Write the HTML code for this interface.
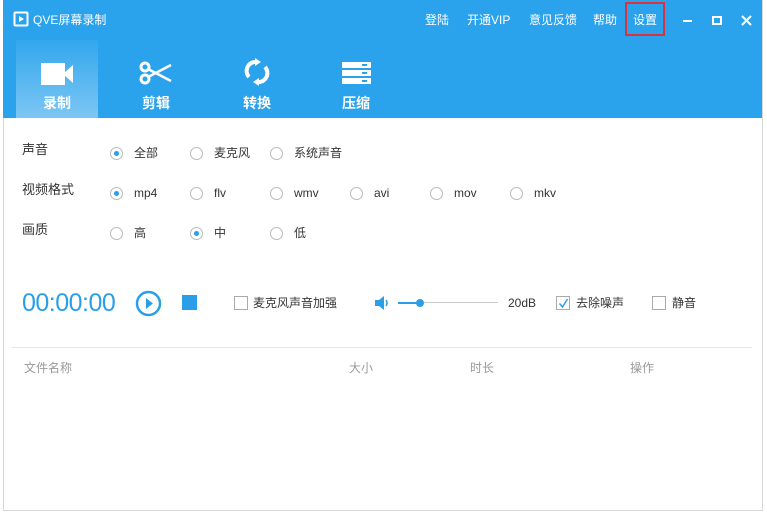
<!DOCTYPE html>
<html><head><meta charset="utf-8"><style>
*{margin:0;padding:0;box-sizing:border-box}
body{width:767px;height:515px;background:#fff;position:relative;overflow:hidden;font-family:"Liberation Sans","Noto Sans CJK SC",sans-serif;font-size:12px;color:#333}
.a{position:absolute;white-space:nowrap}
#win{position:absolute;left:3px;top:0;width:760px;height:511px;border:1px solid #d6d6d6;border-top:none}
#hd{position:absolute;left:3px;top:0;width:759px;height:118px;background:#2ba2ec}
.t{color:#fff;font-size:12px;line-height:14px}
.tab{position:absolute;top:40px;width:82px;height:78px}
.tab .l{position:absolute;bottom:5px;width:100%;text-align:center;color:#fff;font-weight:bold;font-size:14px}
.tab svg{position:absolute;left:23px;top:21px}
.lab{font-size:13px;color:#333;line-height:14px}
.r{position:absolute;width:13px;height:13px;border:1px solid #bbb;border-radius:50%;background:#fff}
.r.on::after{content:"";position:absolute;left:3px;top:3px;width:5px;height:5px;border-radius:50%;background:#2a9fe8}
.ro{font-size:12px;color:#333;line-height:14px}
.cb{position:absolute;width:14px;height:14px;border:1px solid #aaa;background:#fff}
.gh{color:#999;font-size:12px;line-height:14px}
</style></head><body>
<div id="win"></div>
<div id="hd"></div>
<svg class="a" style="left:13px;top:11px" width="16" height="16"><rect x="0.5" y="0.5" width="15" height="15" rx="2" fill="#fff"/><rect x="2.5" y="2.5" width="11" height="11" fill="#2ba2ec"/><path d="M6 5L11 8L6 11Z" fill="#fff"/></svg>
<div class="a t" style="left:33px;top:13px">QVE屏幕录制</div>
<div class="a t" style="left:425px;top:13px">登陆</div>
<div class="a t" style="left:467px;top:13px">开通VIP</div>
<div class="a t" style="left:529px;top:13px">意见反馈</div>
<div class="a t" style="left:593px;top:13px">帮助</div>
<div class="a t" style="left:633px;top:13px">设置</div>
<div class="a" style="left:625px;top:2px;width:40px;height:34px;border:2px solid #d9333f"></div>
<div class="a" style="left:683px;top:20px;width:9px;height:2px;background:#fff"></div>
<div class="a" style="left:712px;top:16px;width:10px;height:9px;border:2px solid #fff"></div>
<svg class="a" style="left:741px;top:15px" width="11" height="11"><path d="M1 1L10 10M10 1L1 10" stroke="#fff" stroke-width="2"/></svg>
<div class="tab" style="left:16px;background:linear-gradient(#33a7ed,#7cc6f3)"><svg width="36" height="26" style="left:25px;top:22px"><rect x="0" y="1" width="24" height="22" fill="#fff"/><path d="M22 12L32 3V21Z" fill="#fff"/></svg><div class="l">录制</div></div>
<div class="tab" style="left:115px"><svg width="36" height="26"><circle cx="7" cy="6" r="4" fill="none" stroke="#fff" stroke-width="3"/><circle cx="7" cy="18" r="4" fill="none" stroke="#fff" stroke-width="3"/><path d="M10 8L33 20M10 16L33 4" stroke="#fff" stroke-width="2.5"/></svg><div class="l">剪辑</div></div>
<div class="tab" style="left:216px"><svg width="36" height="30" style="top:18px"><path d="M10 19A9 9 0 0 1 18 4" fill="none" stroke="#fff" stroke-width="4"/><path d="M16 0L22 4L16 8Z" fill="#fff"/><path d="M26 9A9 9 0 0 1 18 24" fill="none" stroke="#fff" stroke-width="4"/><path d="M20 20L14 24L20 28Z" fill="#fff"/></svg><div class="l">转换</div></div>
<div class="tab" style="left:315px"><svg width="36" height="26"><rect x="4" y="1" width="29" height="6" fill="#fff"/><rect x="4" y="9" width="29" height="6" fill="#fff"/><rect x="4" y="17" width="29" height="6" fill="#fff"/><rect x="24" y="3" width="5" height="2" fill="#2ba2ec"/><rect x="24" y="11" width="5" height="2" fill="#2ba2ec"/><rect x="24" y="19" width="5" height="2" fill="#2ba2ec"/></svg><div class="l">压缩</div></div>

<div class="a lab" style="left:22px;top:143px">声音</div>
<div class="a lab" style="left:22px;top:183px">视频格式</div>
<div class="a lab" style="left:22px;top:223px">画质</div>

<div class="r on" style="left:110px;top:147px"></div><div class="a ro" style="left:134px;top:146px">全部</div>
<div class="r" style="left:190px;top:147px"></div><div class="a ro" style="left:214px;top:146px">麦克风</div>
<div class="r" style="left:270px;top:147px"></div><div class="a ro" style="left:294px;top:146px">系统声音</div>

<div class="r on" style="left:110px;top:187px"></div><div class="a ro" style="left:134px;top:186px">mp4</div>
<div class="r" style="left:190px;top:187px"></div><div class="a ro" style="left:214px;top:186px">flv</div>
<div class="r" style="left:270px;top:187px"></div><div class="a ro" style="left:294px;top:186px">wmv</div>
<div class="r" style="left:350px;top:187px"></div><div class="a ro" style="left:374px;top:186px">avi</div>
<div class="r" style="left:430px;top:187px"></div><div class="a ro" style="left:454px;top:186px">mov</div>
<div class="r" style="left:510px;top:187px"></div><div class="a ro" style="left:534px;top:186px">mkv</div>

<div class="r" style="left:110px;top:227px"></div><div class="a ro" style="left:134px;top:226px">高</div>
<div class="r on" style="left:190px;top:227px"></div><div class="a ro" style="left:214px;top:226px">中</div>
<div class="r" style="left:270px;top:227px"></div><div class="a ro" style="left:294px;top:226px">低</div>

<div class="a" style="left:22px;top:289px;font-size:25px;color:#2a9fe8;line-height:28px;letter-spacing:-0.5px">00:00:00</div>
<svg class="a" style="left:135px;top:290px" width="27" height="27"><circle cx="13.5" cy="13.5" r="11.5" fill="none" stroke="#2a9fe8" stroke-width="2.5"/><path d="M11 8L18 13.5L11 19Z" fill="#2a9fe8"/></svg>
<div class="a" style="left:182px;top:295px;width:15px;height:15px;background:#2a9fe8"></div>
<div class="cb" style="left:234px;top:296px"></div><div class="a ro" style="left:253px;top:296px">麦克风声音加强</div>
<svg class="a" style="left:374px;top:295px" width="16" height="16"><path d="M1 5H5L10 1V15L5 11H1Z" fill="#2a9fe8"/><path d="M12 5Q14 8 12 11" stroke="#2a9fe8" stroke-width="1.5" fill="none"/></svg>
<div class="a" style="left:398px;top:302px;width:100px;height:1px;background:#ccc"></div>
<div class="a" style="left:398px;top:302px;width:22px;height:2px;background:#2a9fe8"></div>
<div class="a" style="left:416px;top:299px;width:8px;height:8px;border-radius:50%;background:#2a9fe8"></div>
<div class="a ro" style="left:508px;top:296px">20dB</div>
<div class="cb" style="left:556px;top:296px"></div>
<svg class="a" style="left:558px;top:298px" width="11" height="11"><path d="M1.5 5.5L4.5 9L9.5 1" stroke="#2a9fe8" stroke-width="1.5" fill="none"/></svg>
<div class="a ro" style="left:576px;top:296px">去除噪声</div>
<div class="cb" style="left:652px;top:296px"></div><div class="a ro" style="left:672px;top:296px">静音</div>

<div class="a" style="left:12px;top:347px;width:740px;height:1px;background:#e6e6e6"></div>
<div class="a gh" style="left:24px;top:361px">文件名称</div>
<div class="a gh" style="left:349px;top:361px">大小</div>
<div class="a gh" style="left:470px;top:361px">时长</div>
<div class="a gh" style="left:630px;top:361px">操作</div>
</body></html>
